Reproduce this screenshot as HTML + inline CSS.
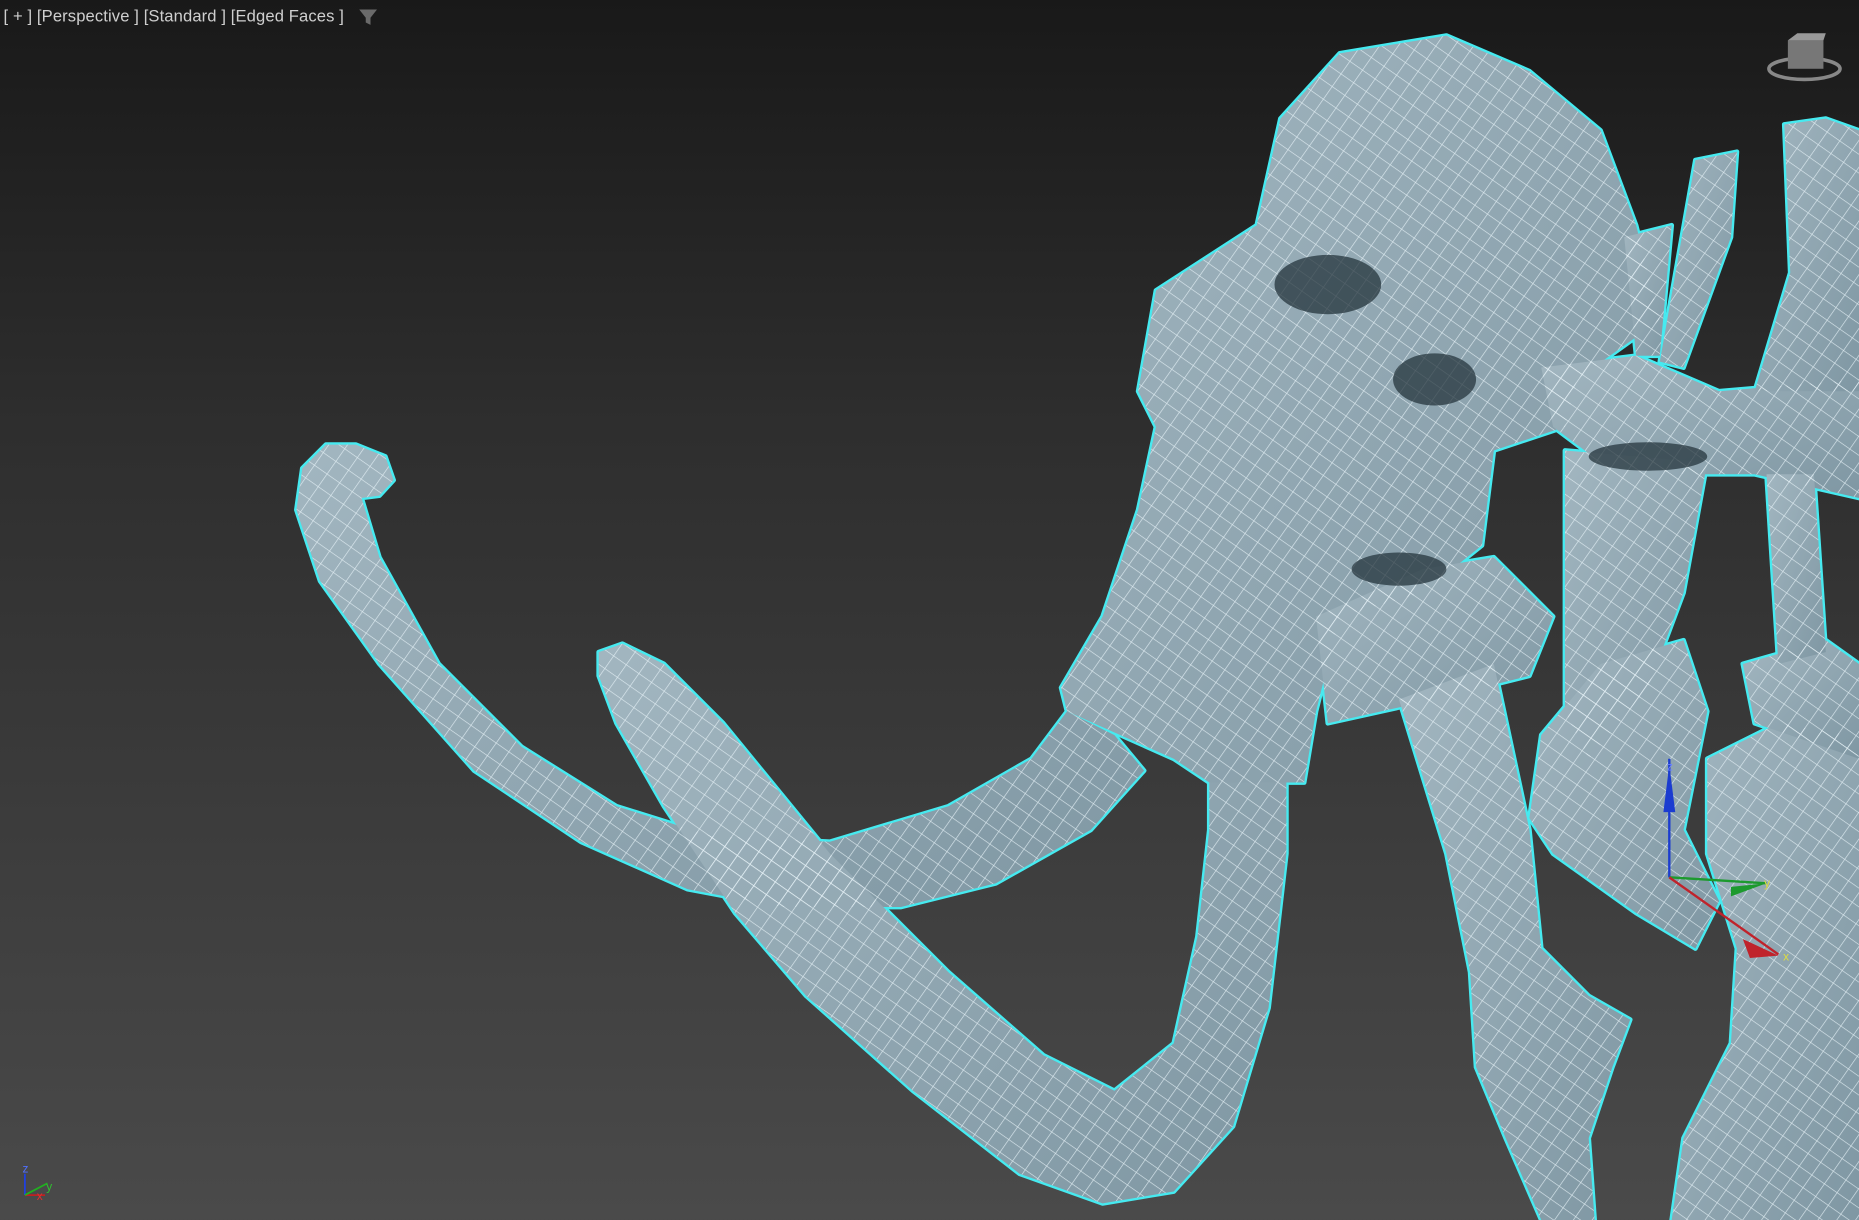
<!DOCTYPE html>
<html><head><meta charset="utf-8"><style>
html,body{margin:0;padding:0;background:#2f2f2f;overflow:hidden}
svg{display:block}
</style></head><body>
<svg width="1859" height="1220" viewBox="0 0 1568 1029" xmlns="http://www.w3.org/2000/svg">
<defs>
<linearGradient id="bg" x1="0" y1="0" x2="0" y2="1">
<stop offset="0" stop-color="#191919"/><stop offset="0.35" stop-color="#2e2e2e"/><stop offset="1" stop-color="#4a4a4a"/>
</linearGradient>
<pattern id="grid" width="13" height="13" patternUnits="userSpaceOnUse" patternTransform="rotate(35)">
<path d="M0 0H13M0 0V13" stroke="#e8f4f8" stroke-width="1.1" fill="none" opacity="0.85"/>
</pattern>
<linearGradient id="sh" x1="0" y1="0" x2="1" y2="1">
<stop offset="0" stop-color="#a2b6c0"/><stop offset="1" stop-color="#7f97a3"/>
</linearGradient>
<g id="body">
<polygon points="300,375 325,385 332,405 320,418 305,420 320,470 370,560 440,630 520,680 600,705 700,710 800,680 870,640 900,600 940,620 965,650 920,700 840,745 760,765 660,765 580,750 490,710 400,650 320,560 270,490 250,430 255,395 275,375"/>
<polygon points="505,550 525,543 560,560 610,610 700,720 800,820 880,890 940,920 990,880 1010,790 1020,700 1020,660 1085,660 1085,720 1070,850 1040,950 990,1005 930,1015 860,990 770,920 680,840 620,770 560,680 520,610 505,570"/>
<polygon points="960,330 975,245 1060,190 1080,100 1130,45 1220,30 1290,60 1350,110 1380,190 1400,270 1330,320 1320,360 1260,380 1250,460 1200,500 1130,520 1110,600 1100,660 1020,660 990,640 900,600 895,580 930,520 960,430 975,360"/>
<polygon points="1110,520 1200,480 1260,470 1310,520 1290,570 1210,590 1120,610"/>
<polygon points="1180,590 1260,560 1290,700 1300,800 1340,840 1375,860 1360,900 1340,960 1345,1029 1300,1029 1270,960 1245,900 1240,820 1220,720"/>
<polygon points="1440,640 1500,610 1560,620 1568,640 1568,1029 1410,1029 1420,960 1460,880 1465,800 1440,720"/>
<polygon points="1300,310 1380,300 1450,330 1568,320 1568,420 1480,400 1420,400 1350,390 1310,360"/>
<polygon points="1320,380 1440,390 1420,500 1390,580 1340,640 1320,600"/>
<polygon points="1300,620 1350,560 1420,540 1440,600 1420,700 1450,760 1430,800 1380,770 1310,720 1290,690"/>
<polygon points="1430,135 1465,128 1460,200 1420,310 1400,305"/>
<polygon points="1505,105 1540,100 1568,110 1568,330 1480,330 1510,230"/>
<polygon points="1370,200 1410,190 1400,300 1380,300"/>
<polygon points="1470,560 1540,540 1568,560 1568,640 1480,610"/>
<polygon points="1490,400 1530,400 1540,550 1500,560"/>
</g>
</defs>
<rect width="1568" height="1029" fill="url(#bg)"/>
<use href="#body" fill="#46eaf0" stroke="#46eaf0" stroke-width="4" stroke-linejoin="round"/>
<use href="#body" fill="url(#sh)"/>
<use href="#body" fill="url(#grid)"/>
<g fill="#25353d" opacity="0.75">
<ellipse cx="1120" cy="240" rx="45" ry="25"/>
<ellipse cx="1210" cy="320" rx="35" ry="22"/>
<ellipse cx="1180" cy="480" rx="40" ry="14"/>
<ellipse cx="1390" cy="385" rx="50" ry="12"/>
</g>
<text x="3" y="18" font-family="Liberation Sans, sans-serif" font-size="14" fill="#cfcfcf" textLength="287">[ + ] [Perspective ]  [Standard ] [Edged Faces ]</text>
<path d="M303 8H318L312.5 15V21L308.5 19V15Z" fill="#6a6a6a"/>
<g>
<ellipse cx="1522" cy="58" rx="30" ry="9" fill="none" stroke="#888" stroke-width="3"/>
<rect x="1508" y="34" width="30" height="24" fill="#777"/>
<polygon points="1508,34 1516,28 1540,28 1538,34" fill="#999"/>
</g>
<g stroke-width="2">
<line x1="1408" y1="640" x2="1408" y2="740" stroke="#1b3cd0"/>
<polygon points="1403,685 1408,645 1413,685" fill="#1b3cd0"/>
<line x1="1408" y1="740" x2="1490" y2="745" stroke="#1c9a2e"/>
<polygon points="1460,748 1490,745 1460,756" fill="#1c9a2e"/>
<line x1="1408" y1="740" x2="1500" y2="805" stroke="#c0232b"/>
<polygon points="1470,792 1500,806 1476,808" fill="#c0232b"/>
<text x="1504" y="810" font-size="10" fill="#dddd40" font-family="Liberation Sans, sans-serif">x</text>
<text x="1488" y="748" font-size="10" fill="#dddd40" font-family="Liberation Sans, sans-serif">y</text>
<text x="1406" y="650" font-size="10" fill="#6a80ff" font-family="Liberation Sans, sans-serif">z</text>
</g>
<g font-family="Liberation Sans, sans-serif" font-size="10">
<line x1="21" y1="990" x2="21" y2="1008" stroke="#2040e0" stroke-width="1.5"/>
<line x1="21" y1="1008" x2="38" y2="1008" stroke="#c02020" stroke-width="1.5"/>
<line x1="21" y1="1008" x2="40" y2="998" stroke="#20b020" stroke-width="1.5"/>
<text x="19" y="989" fill="#5070ff">z</text>
<text x="31" y="1012" fill="#e03030">x</text>
<text x="39" y="1004" fill="#30c030">y</text>
</g>
</svg>
</body></html>
